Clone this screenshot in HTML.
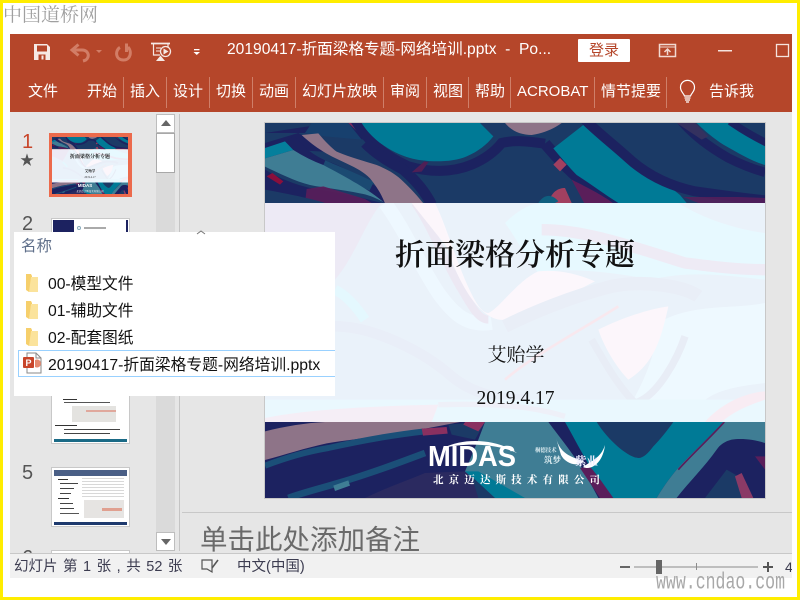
<!DOCTYPE html>
<html lang="zh"><head><meta charset="utf-8"><title>PowerPoint</title>
<style>
*{margin:0;padding:0;box-sizing:border-box}
html,body{width:800px;height:600px;overflow:hidden;background:#fff}
body{position:relative;font-family:"Liberation Sans","Noto Sans CJK SC",sans-serif}
.a{position:absolute;white-space:nowrap}
.t{position:absolute;top:83px;height:18px;line-height:18px;font-size:15px;color:#fff;white-space:nowrap}
.s{position:absolute;top:77px;width:1px;height:31px;background:#cf7f69}
.n{position:absolute;left:22px;font-size:20px;line-height:22px;color:#555}
.f{position:absolute;left:48px;font-size:15.750px;line-height:20px;color:#111;white-space:nowrap}
.th{position:absolute;left:51px;width:79px;background:#fff;border:1px solid #c8c8c8;overflow:hidden}
.l{position:absolute;height:1px;background:#555}
</style></head><body>
<svg width="0" height="0" style="position:absolute"><defs>
<clipPath id="ct"><rect x="0" y="0" width="1500" height="240"/></clipPath>
<clipPath id="cb"><rect x="0" y="897" width="1500" height="228"/></clipPath>
<clipPath id="cm"><rect x="0" y="240" width="1500" height="657"/></clipPath>
<symbol id="bg" viewBox="0 0 1500 1125">
<g clip-path="url(#cm)">
<rect x="0" y="240" width="1500" height="657" fill="#eaf2fa"/>
<path d="M0 240H350C300 300 270 400 210 470C140 440 60 400 0 380Z" fill="#edeaf5"/>
<path d="M720 300C760 260 800 240 830 240H1240C1320 290 1420 320 1500 330V470C1400 460 1280 440 1160 470C1060 450 900 430 820 450C780 400 750 340 720 300Z" fill="#e7f9ff"/>
<path d="M830 320C960 320 1100 370 1260 420C1340 430 1420 440 1500 440" stroke="#eeebf5" stroke-width="34" fill="none"/>
<path d="M360 240C420 320 460 420 520 510C570 580 610 610 680 600" stroke="#eef8ff" stroke-width="42" fill="none"/>
<path d="M450 240C500 310 540 420 590 500C620 550 640 590 670 590" stroke="#ece8f3" stroke-width="24" fill="none"/>
<path d="M510 240C540 300 570 400 600 470C630 540 650 570 670 570C700 560 760 470 820 445C880 440 930 450 990 475C900 520 800 580 720 590C650 600 560 480 510 240Z" fill="#fcf7fc"/>
<path d="M440 240H510C530 290 545 340 560 390C520 340 480 290 440 240Z" fill="#fcf6fb"/>
<path d="M720 610C800 570 920 520 1040 490C1140 470 1260 490 1300 520" stroke="#e9eef7" stroke-width="40" fill="none"/>
<path d="M1180 600C1280 540 1400 560 1500 540V780C1420 790 1350 800 1310 840H1100C1120 800 1170 720 1180 600Z" fill="#eef9ff"/>
<path d="M1000 620C1060 590 1140 560 1210 550C1190 640 1170 720 1090 770C1060 740 1020 680 1000 620Z" fill="#fcf6fb"/>
<path d="M980 650C1020 720 1060 790 1110 840C1180 820 1240 700 1260 640" stroke="#e8edf6" stroke-width="22" fill="none"/>
<path d="M720 770C800 700 950 620 1060 550" stroke="#f8e8ee" stroke-width="8" fill="none"/>
<path d="M210 610C320 610 470 680 560 760C620 810 700 830 780 830" stroke="#e9eef8" stroke-width="32" fill="none"/>
<path d="M210 500C250 520 280 560 300 590" stroke="#e4f8fe" stroke-width="30" fill="none"/>
<path d="M0 830H1500V897H0Z" fill="#eaf8fe"/>
<path d="M0 885C120 860 300 850 520 845L500 897H0Z" fill="#f5eef6"/>
<path d="M1320 897C1360 850 1430 810 1500 805V830C1440 850 1400 870 1370 897Z" fill="#f8ecf3"/>
<path d="M520 845C700 840 800 850 900 880" stroke="#eef0f8" stroke-width="16" fill="none"/>
</g>
<g clip-path="url(#ct)">
<rect x="0" y="0" width="1500" height="240" fill="#1b3a66"/>
<path d="M0 30L130 10L250 0L300 50L120 30Z" fill="#1c2260"/>
<path d="M120 30L140 0H250L290 50L180 40Z" fill="#17406e"/>
<path d="M250 0H285L300 15L280 28Z" fill="#7b2a5e"/>
<path d="M0 60L100 30L110 36L175 86L85 81L0 106Z" fill="#1c2260"/>
<path d="M0 75L60 55L85 81L0 106Z" fill="#057f9c"/>
<path d="M75 46C110 90 140 110 175 126C230 145 285 176 385 241" stroke="#1c2260" stroke-width="30" fill="none"/>
<path d="M175 126C220 145 270 165 320 190" stroke="#1b4a72" stroke-width="30" fill="none"/>
<path d="M270 -10C300 40 340 90 430 130C490 148 560 150 620 125C660 108 690 85 710 60C750 50 790 55 840 62" stroke="#1c2260" stroke-width="30" fill="none"/>
<path d="M300 60C340 100 380 120 415 140C450 170 480 205 500 245" stroke="#1c2260" stroke-width="32" fill="none"/>
<path d="M440 148L478 115L490 118L470 146Z" fill="#4f1f55"/>
<path d="M290 0C320 50 380 90 435 105C480 118 560 120 605 100C640 85 665 65 685 40L645 0Z" fill="#007a96"/>
<path d="M720 0C740 25 770 36 800 36C840 30 870 15 890 0Z" fill="#8e7488"/>
<path d="M110 36L160 31C180 55 200 75 215 86C260 105 300 115 335 126C370 140 395 155 415 176C440 200 460 222 475 241H360C350 215 335 190 315 166C280 130 220 115 175 86C150 70 130 55 110 36Z" fill="#8e7488"/>
<path d="M0 106L85 81C115 100 145 115 175 126C210 145 240 160 265 176C300 195 335 220 360 241C335 225 310 215 285 211C230 200 180 195 135 186C90 175 40 150 0 131Z" fill="#3f7d94"/>
<path d="M0 140C40 165 90 185 135 195C190 205 260 215 350 240H0Z" fill="#1c2260"/>
<path d="M5 160L45 185L55 175L22 150Z" fill="#8a0f3c"/>
<path d="M125 198L175 190L300 228L320 240H120Z" fill="#5a1e5a" opacity=".9"/>
<path d="M0 200C80 215 130 225 180 240H0Z" fill="#1b3a66"/>
<path d="M840 62C880 110 930 160 970 190C1000 215 1030 230 1060 245" stroke="#1c2260" stroke-width="34" fill="none"/>
<path d="M920 170C960 190 1020 220 1050 245L960 245Z" fill="#5a1e5a"/>
<path d="M865 125L885 105L905 125L885 145Z" fill="#a14060"/>
<path d="M865 76L955 6C985 35 1020 60 1055 86C1090 115 1120 135 1155 156C1190 175 1220 195 1245 216L1265 240H1060C1020 215 980 185 935 156C910 130 885 100 865 76Z" fill="#007a96"/>
<path d="M960 -10C1000 30 1040 60 1090 105C1150 160 1220 190 1290 205C1360 215 1430 225 1500 232" stroke="#1c2260" stroke-width="30" fill="none"/>
<path d="M1255 222L1300 240H1500V225L1420 222Z" fill="#5a1e5a" opacity=".8"/>
<path d="M1250 -5C1290 40 1330 70 1390 105C1430 125 1470 140 1500 148" stroke="#1c2260" stroke-width="28" fill="none"/>
<path d="M1295 0H1395C1430 25 1470 50 1500 62V126C1460 115 1420 90 1375 65C1345 45 1320 25 1295 0Z" fill="#007a96"/>
<path d="M1395 -5C1430 20 1465 40 1505 60" stroke="#1c2260" stroke-width="22" fill="none"/>
<path d="M1235 0H1290L1330 40L1310 50Z" fill="#34315f"/>
<path d="M850 240C860 205 880 195 900 195L920 240Z" fill="#a14060"/>
<path d="M820 240C835 215 860 210 880 235L870 240Z" fill="#0f5f80"/>
</g>
<g clip-path="url(#cb)">
<rect x="0" y="897" width="1500" height="228" fill="#1c2260"/>
<path d="M0 925C60 910 120 900 180 897H585L485 916C450 920 420 925 385 931C310 945 250 950 185 961C120 975 60 995 0 1011Z" fill="#8e7488"/>
<path d="M0 1028C60 1005 130 985 190 975C280 955 390 935 480 925" stroke="#1b4f78" stroke-width="18" fill="none"/>
<path d="M470 917L545 912L548 932L474 938Z" fill="#8a3060"/>
<path d="M550 905L640 897L660 897L630 950L560 935Z" fill="#1b3a66"/>
<path d="M600 897H660L640 925L595 905Z" fill="#8a3060"/>
<path d="M70 1125C110 1110 170 1095 220 1080C320 1050 400 1020 480 990" stroke="#1b4f78" stroke-width="20" fill="none"/>
<path d="M205 1088L250 1072L255 1088L210 1104Z" fill="#3f7d94"/>
<path d="M400 1085L425 1075L440 1095L415 1103Z" fill="#8a3060"/>
<path d="M300 1125C360 1095 420 1075 480 1050L600 1045L680 1125Z" fill="#2b2a60"/>
<path d="M660 897H900L1035 1125H690L600 1045L640 950Z" fill="#3f7d94"/>
<path d="M600 1045L640 1045L780 1125H690Z" fill="#007a96"/>
<path d="M620 1060L690 1125H640Z" fill="#1b3a66"/>
<path d="M850 897H915L990 1031L1050 1125H1000L960 1050C930 1000 890 950 850 897Z" fill="#1c2260"/>
<path d="M945 1035L985 1030L1045 1125H1005Z" fill="#5a1e5a"/>
<path d="M900 897H1375C1325 950 1280 990 1235 1040C1210 1070 1190 1100 1175 1125H1045C1020 1090 1000 1060 975 1031C950 990 925 940 900 897Z" fill="#007a96"/>
<path d="M995 897H1225C1205 925 1185 950 1165 970C1150 990 1135 1005 1120 1005C1095 1005 1035 960 995 897Z" fill="#1b3a66"/>
<path d="M1375 897H1500V960C1470 950 1430 945 1400 950C1380 955 1365 965 1355 980C1320 1030 1270 1080 1235 1125H1175C1190 1100 1210 1070 1235 1040C1280 990 1325 950 1375 897Z" fill="#3f7d94"/>
<path d="M1378 897C1330 950 1285 990 1240 1040" stroke="#5a1e5a" stroke-width="5" fill="none"/>
<path d="M1235 1125C1270 1080 1320 1030 1355 985C1375 960 1400 950 1435 950C1460 950 1485 955 1500 965V1125Z" fill="#1c2260"/>
<path d="M1320 1125L1385 1040L1420 1060L1430 1125Z" fill="#1b3a66"/>
<path d="M1410 1060L1430 1050L1465 1125H1430Z" fill="#8a3a66"/>
<path d="M1470 1000L1500 1040V1000Z" fill="#5a1e5a"/>
</g>
</symbol>
</defs></svg>

<!-- yellow frame -->
<div class="a" style="left:0;top:0;width:800px;height:3px;background:#ffed00"></div>
<div class="a" style="left:0;top:0;width:3px;height:600px;background:#ffed00"></div>
<div class="a" style="left:797px;top:0;width:3px;height:600px;background:#ffed00"></div>
<div class="a" style="left:0;top:597px;width:800px;height:3px;background:#ffed00"></div>

<div class="a" style="left:3px;top:2px;font:19px/24px 'WenQuanYi Zen Hei','Noto Serif CJK SC',serif;color:#a0a0a0">中国道桥网</div>

<!-- app background -->
<div class="a" style="left:10px;top:34px;width:782px;height:544px;background:#e6e6e6"></div>
<div class="a" style="left:10px;top:34px;width:782px;height:78px;background:#b5462a"></div>

<!-- title bar icons -->
<svg class="a" style="left:10px;top:34px" width="782" height="78">
<path d="M24 10H37L40 13V26H24Z" fill="#f6e9e5"/><rect x="27" y="11.500" width="10" height="6" fill="#b5462a"/><rect x="28.500" y="20.500" width="7" height="5.500" fill="#b5462a"/><rect x="31.500" y="21.500" width="2" height="4" fill="#f6e9e5"/>
<path d="M62 16H72C77 16 79 20 78 23C77 26 75 26.500 73 27" fill="none" stroke="#d27d66" stroke-width="3"/><path d="M68.500 10.500L62 16L68.500 21.500" fill="none" stroke="#d27d66" stroke-width="3"/>
<path d="M86 16H92L89 19Z" fill="#d27d66"/>
<path d="M110 13.500C105 16 105 26 113.500 26C121 26 122 17 118 13" fill="none" stroke="#d27d66" stroke-width="3"/><path d="M116.500 9.500V18" fill="none" stroke="#d27d66" stroke-width="3"/>
<path d="M141 9.500H160" stroke="#f6e9e5" stroke-width="1.800"/><path d="M143.500 10V21H150M158 10V13" fill="none" stroke="#f6e9e5" stroke-width="1.200"/><path d="M146 14H151M146 17H150" stroke="#f6e9e5" stroke-width="1"/><circle cx="155.500" cy="17.500" r="5" fill="none" stroke="#f6e9e5" stroke-width="1.300"/><path d="M153.500 14.500L158.500 17.500L153.500 20.500Z" fill="#f6e9e5"/><path d="M146 27H155L150.500 21.500Z" fill="#f6e9e5"/>
<rect x="184" y="15" width="5.500" height="1.300" fill="#fff"/><path d="M183.500 18H190L186.750 21Z" fill="#fff"/>
<rect x="649.500" y="10.500" width="16" height="12" fill="none" stroke="#f2d9d2" stroke-width="1.500"/><path d="M650 13H665" stroke="#f2d9d2" stroke-width="1"/><path d="M657.500 21V15M654.500 18L657.500 15L660.500 18" fill="none" stroke="#f2d9d2" stroke-width="1.500"/>
<rect x="708" y="16" width="14" height="1.500" fill="#f5e3de"/>
<rect x="766.500" y="10.500" width="12" height="12" fill="none" stroke="#f5e3de" stroke-width="1.300"/>
<path d="M674.500 62C673.500 59 670.500 57.500 670.500 53.500C670.500 44 684.500 44 684.500 53.500C684.500 57.500 681.500 59 680.500 62Z" fill="none" stroke="#fff" stroke-width="1.200"/><path d="M674.500 64H680.500M675 66H680M676 68H679" stroke="#fff" stroke-width="1.200"/>
</svg>
<div class="a" style="left:227px;top:41px;font-size:15.600px;line-height:18px;color:#fff;white-space:pre">20190417-折面梁格专题-网络培训.pptx  -  Po...</div>
<div class="a" style="left:578px;top:39px;width:52px;height:23px;background:#fff;border-radius:1px;color:#b5462a;font-size:15px;line-height:23px;text-align:center">登录</div>

<!-- ribbon tabs -->
<div class="t" style="left:28px">文件</div>
<div class="t" style="left:87px">开始</div>
<div class="t" style="left:130px">插入</div>
<div class="t" style="left:173px">设计</div>
<div class="t" style="left:216px">切换</div>
<div class="t" style="left:259px">动画</div>
<div class="t" style="left:302px">幻灯片放映</div>
<div class="t" style="left:390px">审阅</div>
<div class="t" style="left:433px">视图</div>
<div class="t" style="left:475px">帮助</div>
<div class="t" style="left:517px">ACROBAT</div>
<div class="t" style="left:601px">情节提要</div>
<div class="t" style="left:709px">告诉我</div>
<div class="s" style="left:123px"></div><div class="s" style="left:166px"></div><div class="s" style="left:209px"></div><div class="s" style="left:252px"></div><div class="s" style="left:295px"></div><div class="s" style="left:383px"></div><div class="s" style="left:426px"></div><div class="s" style="left:468px"></div><div class="s" style="left:510px"></div><div class="s" style="left:594px"></div><div class="s" style="left:666px"></div>

<!-- thumbnails pane -->
<div class="a" style="left:156px;top:114px;width:19px;height:436px;background:#dadada"></div>
<div class="a" style="left:156px;top:114px;width:19px;height:19px;background:#fff;border:1px solid #bdbdbd"></div>
<svg class="a" style="left:160px;top:119px" width="12" height="8"><path d="M1 7L6 1L11 7Z" fill="#666"/></svg>
<div class="a" style="left:156px;top:133px;width:19px;height:40px;background:#fff;border:1px solid #a8a8a8"></div>
<div class="a" style="left:156px;top:532px;width:19px;height:19px;background:#fff;border:1px solid #bdbdbd"></div>
<svg class="a" style="left:160px;top:538px" width="12" height="8"><path d="M1 1L6 7L11 1Z" fill="#666"/></svg>
<div class="a" style="left:179px;top:114px;width:1px;height:437px;background:#c4c4c4"></div>
<div class="a" style="left:182px;top:512px;width:610px;height:1px;background:#c8c8c8"></div>

<div class="n" style="top:131px;color:#c8452a">1</div>
<div class="a" style="left:20px;top:152px;font-size:14px;line-height:16px;color:#555">★</div>
<div class="n" style="top:213px">2</div>
<div class="n" style="top:462px">5</div>
<div class="n" style="top:547px;height:6px;overflow:hidden">6</div>

<div class="a" style="left:49px;top:133px;width:83px;height:64px;background:#ec6a4c"></div>
<svg class="a" style="left:52px;top:137px" width="76" height="57"><use href="#bg" width="76" height="57"/>
<text x="38" y="21" text-anchor="middle" font-size="5" font-family="Noto Serif CJK SC,serif" font-weight="bold" fill="#111">折面梁格分析专题</text>
<text x="38" y="35" text-anchor="middle" font-size="3.500" font-family="Noto Serif CJK SC,serif" font-weight="bold" fill="#111">艾贻学</text>
<text x="38" y="41" text-anchor="middle" font-size="2.800" font-family="Liberation Serif,serif" fill="#333">2019.4.17</text>
<text x="33" y="50" text-anchor="middle" font-size="4.500" font-weight="bold" font-family="Liberation Sans,sans-serif" fill="#fff">MIDAS</text>
<text x="38" y="55" text-anchor="middle" font-size="2.500" font-family="Noto Serif CJK SC,serif" fill="#fff">北京迈达斯技术有限公司</text>
</svg>

<div class="th" style="top:218px;height:40px">
<div class="a" style="left:1px;top:1px;width:21px;height:40px;background:#1c2260"></div>
<div class="a" style="left:74px;top:1px;width:2px;height:40px;background:#1c2260"></div>
<div class="a" style="left:25px;top:7px;width:4px;height:4px;border:1px solid #8ab;border-radius:50%"></div>
<div class="a" style="left:32px;top:8px;width:22px;height:2px;background:#aaa"></div>
</div>

<div class="th" style="top:380px;height:64px">
<div class="l" style="left:11px;top:18px;width:14px;background:#333"></div><div class="l" style="left:12px;top:21px;width:46px;background:#555"></div>
<div class="a" style="left:20px;top:25px;width:44px;height:16px;background:#e4e3e0"></div>
<div class="a" style="left:34px;top:29px;width:30px;height:2px;background:#e0a89c"></div>
<div class="l" style="left:3px;top:44px;width:22px;background:#333"></div>
<div class="l" style="left:12px;top:48px;width:56px;background:#444"></div>
<div class="l" style="left:12px;top:52px;width:46px;background:#444"></div>
<div class="a" style="left:2px;top:58px;width:73px;height:3px;background:#1a6a86"></div>
</div>

<div class="th" style="top:467px;height:60px">
<div class="a" style="left:2px;top:2px;width:73px;height:6px;background:#4a5f86"></div>
<div class="l" style="left:6px;top:11px;width:10px;background:#333"></div>
<div class="l" style="left:8px;top:15px;width:18px;background:#444"></div>
<div class="l" style="left:8px;top:20px;width:14px;background:#444"></div>
<div class="l" style="left:8px;top:25px;width:11px;background:#444"></div>
<div class="l" style="left:6px;top:30px;width:11px;background:#333"></div>
<div class="l" style="left:8px;top:35px;width:13px;background:#444"></div>
<div class="l" style="left:8px;top:40px;width:14px;background:#444"></div>
<div class="l" style="left:8px;top:45px;width:19px;background:#555"></div>
<div class="a" style="left:30px;top:10px;width:42px;height:20px;background:repeating-linear-gradient(#d8d8d8 0 1px,#fff 1px 3px)"></div>
<div class="a" style="left:32px;top:32px;width:40px;height:18px;background:#e6e4e2"></div>
<div class="a" style="left:50px;top:40px;width:20px;height:3px;background:#e0a090"></div>
<div class="a" style="left:2px;top:54px;width:73px;height:3px;background:#1e3a6e"></div>
</div>
<div class="a" style="left:51px;top:550px;width:79px;height:3px;background:#fff;border:1px solid #c8c8c8;border-bottom:0"></div>

<!-- main slide -->
<div class="a" style="left:264px;top:122px;width:502px;height:377px;background:#c8c8c8"></div>
<svg class="a" style="left:265px;top:123px" width="500" height="375"><use href="#bg" width="500" height="375"/>
<text x="250" y="142" text-anchor="middle" font-size="30" font-family="Noto Serif CJK SC,serif" font-weight="600" fill="#111">折面梁格分析专题</text>
<text x="251" y="238" text-anchor="middle" font-size="19" font-family="Noto Serif CJK SC,serif" fill="#111">艾贻学</text>
<text x="250.500" y="281" text-anchor="middle" font-size="19.500" font-family="Liberation Serif,serif" fill="#111">2019.4.17</text>
<text x="163" y="343" font-size="29" font-weight="bold" font-family="Liberation Sans,sans-serif" fill="#fff" textLength="88" lengthAdjust="spacingAndGlyphs">MIDAS</text>
<path d="M178 325C200 314 232 316 252 330C232 321 203 319 178 325Z" fill="#fff"/>
<text x="168" y="360" font-size="10.500" font-weight="bold" font-family="Noto Serif CJK SC,serif" fill="#fff" textLength="167">北京迈达斯技术有限公司</text>
<path d="M291 315C295 330 305 334 319 338C312 345 300 340 296 332Z" fill="#fff"/>
<path d="M340 322C336 335 326 338 318 344C326 348 338 340 340 322Z" fill="#fff"/>
<text x="270" y="329" font-size="5.400" font-family="Noto Serif CJK SC,serif" font-weight="bold" fill="#dfeef2">桐德技术</text>
<text x="279" y="340" font-size="8.500" font-family="Noto Serif CJK SC,serif" font-weight="bold" fill="#dfeef2">筑梦</text>
<text x="310" y="342" font-size="11.500" font-family="Noto Serif CJK SC,serif" font-weight="bold" fill="#eef">紫业</text>
</svg>

<!-- notes -->
<div class="a" style="left:200px;top:523px;font-size:27.500px;line-height:34px;height:30px;overflow:hidden;color:#6a6a6a">单击此处添加备注</div>

<!-- status bar -->
<div class="a" style="left:10px;top:553px;width:782px;height:25px;background:#f1f1f1;border-top:1px solid #c8c8c8"></div>
<div class="a" style="left:14px;top:558px;font-size:14.500px;line-height:18px;color:#3c3c50;white-space:pre;word-spacing:1.500px">幻灯片 第 1 张 , 共 52 张</div>
<svg class="a" style="left:200px;top:558px" width="20" height="16"><path d="M2 2H12V14L7 11H2Z" fill="none" stroke="#555" stroke-width="1.200"/><path d="M12 10L18 2" stroke="#555" stroke-width="1.600"/></svg>
<div class="a" style="left:237px;top:558px;font-size:14.500px;line-height:18px;color:#3c3c50">中文(中国)</div>
<svg class="a" style="left:618px;top:556px" width="174" height="22">
<rect x="2" y="10" width="10" height="2" fill="#666"/>
<rect x="16" y="10.500" width="124" height="1" fill="#8c8c8c"/>
<rect x="78" y="7" width="1" height="7" fill="#8c8c8c"/>
<rect x="38" y="4" width="6" height="14" fill="#666"/>
<path d="M145 11H155M150 6V16" stroke="#555" stroke-width="2"/>
<text x="167" y="16" font-size="14" font-family="Liberation Sans,sans-serif" fill="#3c3c50">4</text>
</svg>

<!-- popup -->
<div class="a" style="left:14px;top:232px;width:321px;height:164px;background:#fff"></div>
<svg class="a" style="left:195px;top:229px" width="12" height="6"><path d="M2 5L6 2L10 5" fill="none" stroke="#777" stroke-width="1"/></svg>
<div class="a" style="left:21px;top:237px;font-size:15.500px;line-height:20px;color:#5f6f8a">名称</div>
<svg class="a" style="left:24px;top:272px" width="16" height="75">
<g><path d="M2 2H7L8 4V20H5L2 18Z" fill="#f6cf6b"/><path d="M7 5H14V20H5Z" fill="#fbe39c"/></g>
<g transform="translate(0,27)"><path d="M2 2H7L8 4V20H5L2 18Z" fill="#f6cf6b"/><path d="M7 5H14V20H5Z" fill="#fbe39c"/></g>
<g transform="translate(0,54)"><path d="M2 2H7L8 4V20H5L2 18Z" fill="#f6cf6b"/><path d="M7 5H14V20H5Z" fill="#fbe39c"/></g>
</svg>
<div class="f" style="top:275px;letter-spacing:-.05px">00-模型文件</div>
<div class="f" style="top:302px;letter-spacing:-.05px">01-辅助文件</div>
<div class="f" style="top:329px;letter-spacing:-.05px">02-配套图纸</div>
<div class="a" style="left:18px;top:350px;width:317px;height:27px;border:1px solid #99d1ff;border-right:0;background:#fff"></div>
<svg class="a" style="left:22px;top:352px" width="20" height="22">
<path d="M5 1H14L19 6V21H5Z" fill="#fff" stroke="#8a8a8a"/><path d="M14 1V6H19" fill="none" stroke="#8a8a8a"/>
<rect x="1" y="5" width="11" height="11" rx="1" fill="#c8452a"/>
<text x="3.500" y="14" font-size="9" font-weight="bold" fill="#fff" font-family="Liberation Sans,sans-serif">P</text>
<path d="M13 8A4 4 0 1 1 13 15Z" fill="#e58a70"/>
</svg>
<div class="f" style="top:356px">20190417-折面梁格专题-网络培训.pptx</div>

<!-- watermark -->
<svg class="a" style="left:650px;top:568px" width="145" height="28">
<text x="6" y="21" font-size="16.500" font-family="Liberation Mono,monospace" fill="#a8a8a8" transform="translate(0,-9) scale(1,1.400)" textLength="129" lengthAdjust="spacingAndGlyphs">www.cndao.com</text>
</svg>
</body></html>
